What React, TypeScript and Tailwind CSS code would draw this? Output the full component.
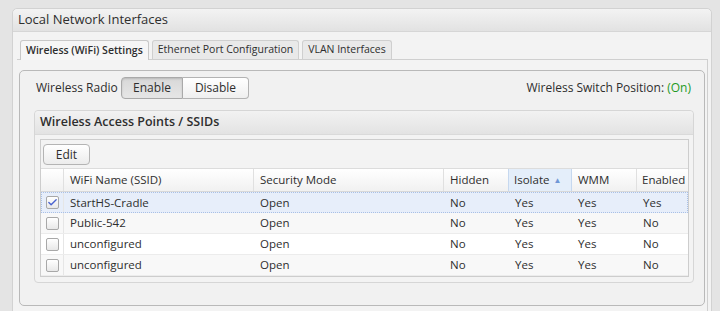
import { Check } from 'lucide-react';

const font = { fontFamily: '"Open Sans", "Liberation Sans", sans-serif' };

const cols = [
  { key: 'name', label: 'WiFi Name (SSID)', w: 'w-[190px] shrink-0 px-[6px] border-r border-[#e0e0e0]' },
  { key: 'sec', label: 'Security Mode', w: 'w-[190px] shrink-0 px-[6px] border-r border-[#e0e0e0]' },
  { key: 'hidden', label: 'Hidden', w: 'w-[65px] shrink-0 px-[6px] border-r border-[#c6d8ef]' },
  { key: 'isolate', label: 'Isolate', w: 'w-[63px] shrink-0 px-[5px] border-r border-[#c6d8ef] bg-[#e4eefa]' },
  { key: 'wmm', label: 'WMM', w: 'w-[65px] shrink-0 px-[6px] border-r border-[#e0e0e0]' },
  { key: 'enabled', label: 'Enabled', w: 'flex-1 min-w-0 pl-[5px]' },
];

const rows = [
  { name: 'StartHS-Cradle', sec: 'Open', hidden: 'No', isolate: 'Yes', wmm: 'Yes', enabled: 'Yes', checked: true },
  { name: 'Public-542', sec: 'Open', hidden: 'No', isolate: 'Yes', wmm: 'Yes', enabled: 'No', checked: false },
  { name: 'unconfigured', sec: 'Open', hidden: 'No', isolate: 'Yes', wmm: 'Yes', enabled: 'No', checked: false },
  { name: 'unconfigured', sec: 'Open', hidden: 'No', isolate: 'Yes', wmm: 'Yes', enabled: 'No', checked: false },
];

function Checkbox({ checked }: { checked: boolean }) {
  return (
    <div className="w-[13px] h-[13px] border border-[#a8a8a8] rounded-[2px] bg-gradient-to-b from-white to-[#e8e8e8] flex items-center justify-center">
      {checked && <Check size={11} strokeWidth={3} className="text-[#4a63d0]" />}
    </div>
  );
}

export default function App() {
  return (
    <div className="w-[720px] h-[311px] overflow-hidden bg-[#e4e4e4] pt-[8px] pl-[12px] pr-[8px] text-[#2e2e2e]" style={font}>
      {/* Outer panel */}
      <div className="h-[310px] border border-[#d2d2d2] rounded-t-[5px] bg-[#f3f3f3] flex flex-col">
        <div className="h-[23px] px-[5px] flex items-center text-[13px] font-medium bg-gradient-to-b from-[#f3f3f3] to-[#e2e2e2] border-b border-[#d6d6d6] rounded-t-[5px]">
          Local Network Interfaces
        </div>

        <div className="pt-[7px] pl-[4px] pr-[3px] flex-1 flex flex-col">
          {/* Tabs */}
          <div className="flex gap-[3px] pl-[3px] h-[20px] items-end">
            <div className="h-[20px] px-[5px] flex items-center text-[10.5px] font-semibold border border-b-0 border-[#c8c8c8] rounded-t-[3px] bg-[#f6f6f6] -mb-px relative z-10">
              Wireless (WiFi) Settings
            </div>
            <div className="h-[19px] px-[5px] flex items-center text-[10.5px] border border-b-0 border-[#cfcfcf] rounded-t-[3px] bg-[#e9e9e9]">
              Ethernet Port Configuration
            </div>
            <div className="h-[19px] px-[5px] flex items-center text-[10.5px] border border-b-0 border-[#cfcfcf] rounded-t-[3px] bg-[#e9e9e9]">
              VLAN Interfaces
            </div>
          </div>

          {/* Tab content */}
          <div className="flex-1 border-t border-r border-[#cfcfcf] pt-[10px] px-[2px]">
            <div className="h-[236px] border border-[#b9b9b9] rounded-[5px] bg-[#f1f1f1] pl-[14px] pr-[10px] pt-[5px]">
              {/* Radio row */}
              <div className="flex items-center h-[23px] pr-[3px]">
                <span className="text-[12px] pl-[2px] w-[87px]">Wireless Radio</span>
                <div className="flex">
                  <div className="w-[62px] h-[22px] flex items-center justify-center text-[12px] border border-[#a9a9a9] rounded-l-[4px] bg-gradient-to-b from-[#d8d8d8] to-[#e6e6e6] shadow-[inset_0_1px_2px_rgba(0,0,0,0.15)]">
                    Enable
                  </div>
                  <div className="w-[66px] h-[22px] flex items-center justify-center text-[12px] border border-l-0 border-[#b3b3b3] rounded-r-[4px] bg-gradient-to-b from-white to-[#efefef]">
                    Disable
                  </div>
                </div>
                <div className="ml-auto text-[12px]">
                  Wireless Switch Position: <span className="text-[#1f9a1f]">(On)</span>
                </div>
              </div>

              {/* SSID section */}
              <div className="mt-[11px] border border-[#d6d6d6] rounded-[4px] bg-[#f3f3f3] pb-[5px]">
                <div className="h-[24px] px-[5px] flex items-center text-[12.5px] font-semibold bg-gradient-to-b from-[#f2f2f2] to-[#e3e3e3] border-b border-[#dadada] rounded-t-[4px]">
                  Wireless Access Points / SSIDs
                </div>
                <div className="mt-[4px] ml-[5px] mr-[4px] border border-[#cdcdcd] bg-white">
                  {/* Toolbar */}
                  <div className="h-[29px] bg-[#f3f3f3] pl-[2px] pt-[4px] border-b border-[#dcdcdc]">
                    <div className="w-[47px] h-[21px] flex items-center justify-center text-[12px] border border-[#b4b4b4] rounded-[4px] bg-gradient-to-b from-white to-[#ececec]">
                      Edit
                    </div>
                  </div>
                  {/* Header */}
                  <div className="flex h-[23px] text-[11.5px] bg-gradient-to-b from-white to-[#f1f1f1] border-b border-[#d8d8d8]">
                    <div className="w-[23px] shrink-0 border-r border-[#e0e0e0]" />
                    {cols.map((c) => (
                      <div key={c.key} className={`${c.w} flex items-center whitespace-nowrap overflow-hidden`}>
                        {c.label}
                        {c.key === 'isolate' && <span className="ml-[4px] text-[8px] text-[#6f97d6]">▲</span>}
                      </div>
                    ))}
                  </div>
                  {/* Rows */}
                  {rows.map((r, i) => (
                    <div
                      key={i}
                      className={`flex h-[21px] text-[11.5px] ${
                        r.checked
                          ? 'bg-[#e7eefa] border border-dotted border-[#a9c0e6]'
                          : i % 2 === 1
                          ? 'bg-[#f8f8f8] border-b border-[#ececec]'
                          : 'bg-white border-b border-[#ececec]'
                      }`}
                    >
                      <div className={`${r.checked ? 'w-[22px]' : 'w-[23px]'} shrink-0 flex items-center justify-center border-r border-[#e6e6e6]`}>
                        <Checkbox checked={r.checked} />
                      </div>
                      <div className="w-[190px] shrink-0 px-[6px] flex items-center">{r.name}</div>
                      <div className="w-[190px] shrink-0 px-[6px] flex items-center">{r.sec}</div>
                      <div className="w-[65px] shrink-0 px-[6px] flex items-center">{r.hidden}</div>
                      <div className="w-[63px] shrink-0 px-[6px] flex items-center">{r.isolate}</div>
                      <div className="w-[65px] shrink-0 px-[6px] flex items-center">{r.wmm}</div>
                      <div className="flex-1 min-w-0 px-[6px] flex items-center">{r.enabled}</div>
                    </div>
                  ))}
                </div>
              </div>
            </div>
          </div>
        </div>
      </div>
    </div>
  );
}
